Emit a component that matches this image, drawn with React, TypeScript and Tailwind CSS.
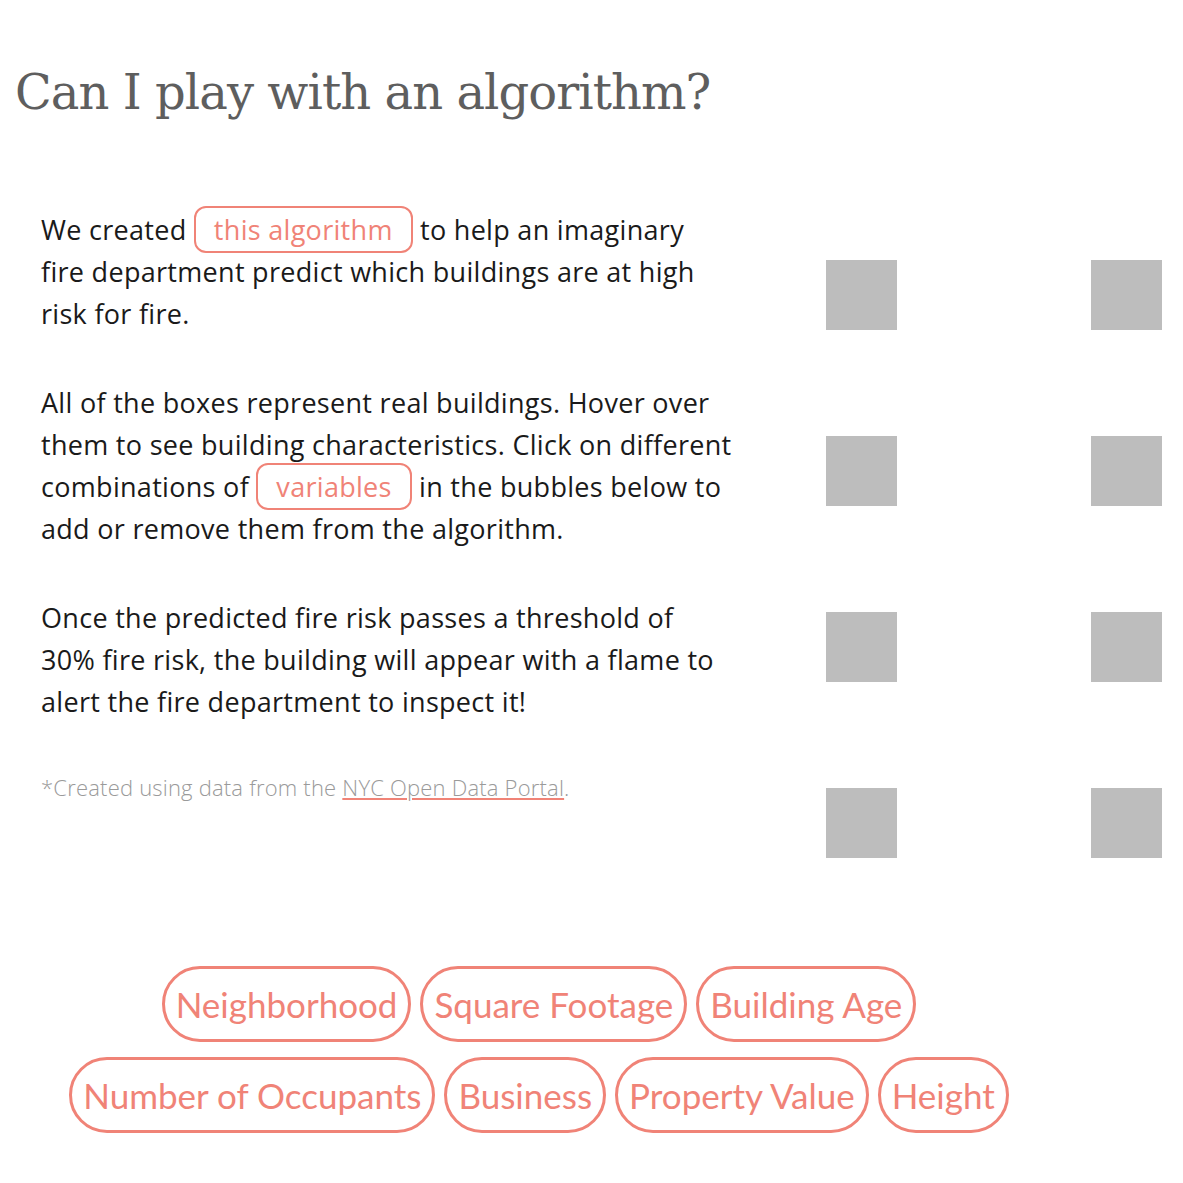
import React from "react";

const salmon = "#f08377";

function InlinePill({ children }: { children: React.ReactNode }) {
  return (
    <span className="rounded-[12px] border-2 border-[#f08377] px-[18px] py-[3px] text-[#f08377]">
      {children}
    </span>
  );
}

const variables = [
  ["Neighborhood", "Square Footage", "Building Age"],
  ["Number of Occupants", "Business", "Property Value", "Height"],
];

export default function App() {
  return (
    <div className="min-h-[1183px] w-[1183px] bg-white font-['Open_Sans',sans-serif] text-[#1a1a1a]">
      <h1 className="pl-[15px] pt-[62px] font-['DejaVu_Serif',serif] text-[48px] leading-[60px] tracking-[-0.95px] text-[#5e5e5e]">
        Can I play with an algorithm?
      </h1>

      <div className="mt-[87px] flex">
        <div className="w-[826px] whitespace-nowrap pl-[41px] text-[27px] leading-[42px] tracking-[0.3px]">
          <p>
            We created <InlinePill>this algorithm</InlinePill> to help an imaginary
            <br />
            fire department predict which buildings are at high
            <br />
            risk for fire.
          </p>
          <p className="mt-[47px]">
            All of the boxes represent real buildings. Hover over
            <br />
            them to see building characteristics. Click on different
            <br />
            combinations of <InlinePill>variables</InlinePill> in the bubbles below to
            <br />
            add or remove them from the algorithm.
          </p>
          <p className="mt-[47px]">
            Once the predicted fire risk passes a threshold of
            <br />
            30% fire risk, the building will appear with a flame to
            <br />
            alert the fire department to inspect it!
          </p>
          <p className="mt-[43px] text-[22px] font-light tracking-[0.2px] text-[#9a9a9a]">
            *Created using data from the{" "}
            <a className="underline decoration-[#f08377] underline-offset-2">NYC Open Data Portal</a>.
          </p>
        </div>

        <div className="grid grid-cols-[71px_71px] gap-x-[194px] gap-y-[106px] pt-[51px]">
          {Array.from({ length: 8 }).map((_, i) => (
            <div key={i} className="h-[70px] w-[71px] bg-[#bdbdbd]" />
          ))}
        </div>
      </div>

      <div className="mt-[108px] flex w-[1078px] flex-col items-center gap-[15px]">
        {variables.map((row, r) => (
          <div key={r} className="flex gap-[9px]">
            {row.map((v) => (
              <button
                key={v}
                className="h-[76px] rounded-full border-[3px] px-[11px] font-['Lato',sans-serif] text-[35px]"
                style={{ borderColor: salmon, color: salmon }}
              >
                {v}
              </button>
            ))}
          </div>
        ))}
      </div>
    </div>
  );
}
